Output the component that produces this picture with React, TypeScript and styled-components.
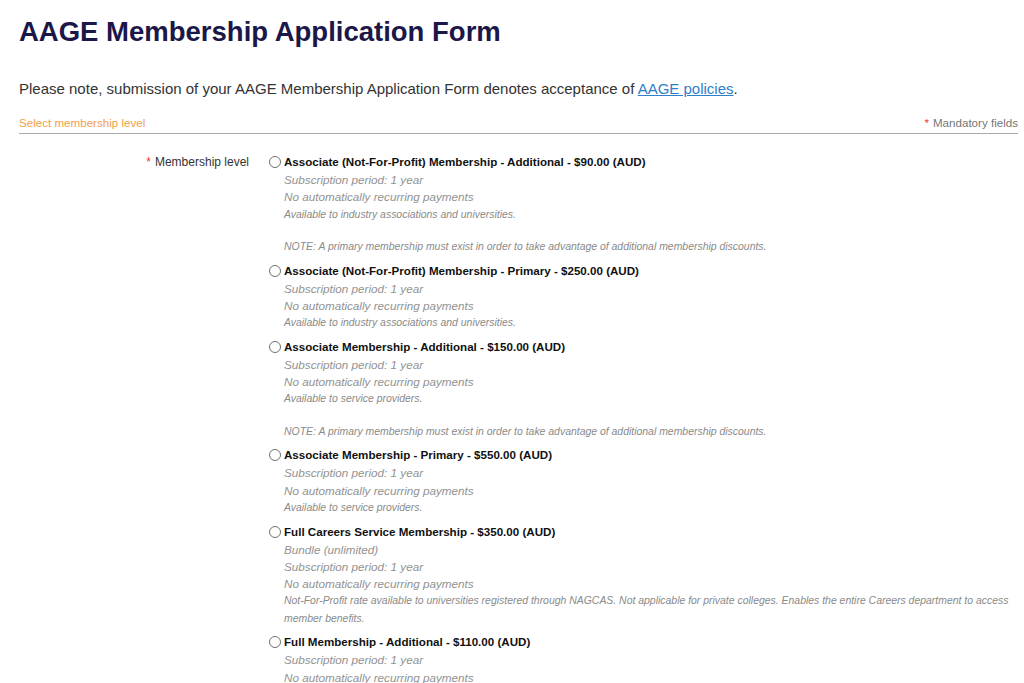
import styled, { createGlobalStyle } from 'styled-components'

const GlobalStyle = createGlobalStyle`
    body {
        margin: 0;
        background: #ffffff;
        font-family: 'Liberation Sans', Arial, sans-serif;
    }
`

const Page = styled.main`
    padding: 14px 6px 0 19px;
`

const Title = styled.h1`
    margin: 0;
    font-size: 27.5px;
    line-height: 36px;
    font-weight: bold;
    color: #1b1749;
`

const Intro = styled.p`
    margin: 29px 0 0;
    font-size: 15px;
    line-height: 20px;
    color: #333333;

    a {
        color: #2f80c8;
        text-decoration: underline;
    }
`

const SectionHeader = styled.header`
    display: flex;
    justify-content: space-between;
    align-items: flex-end;
    margin-top: 16px;
    padding-bottom: 2px;
    border-bottom: 1px solid #aaaaaa;
    font-size: 11.6px;
    line-height: 16px;

    h2 {
        margin: 0;
        font-size: 11.6px;
        font-weight: normal;
        color: #f0a048;
    }

    span {
        color: #777777;
    }
`

const Star = styled.span`
    color: #e03c31 !important;
    margin-right: 4px;
`

const FieldRow = styled.section`
    display: grid;
    grid-template-columns: 230px 1fr;
    column-gap: 20px;
    margin-top: 19px;
`

const FieldLabel = styled.label`
    text-align: right;
    font-size: 12px;
    line-height: 18px;
    color: #333333;
`

const Options = styled.div`
    display: flex;
    flex-direction: column;
    gap: 6.5px;
`

const Option = styled.div`
    display: grid;
    grid-template-columns: 15px 1fr;
`

const Radio = styled.span`
    width: 12px;
    height: 12px;
    margin-top: 3px;
    border: 1px solid #6f6f6f;
    border-radius: 50%;
    box-sizing: border-box;
`

const OptionTitle = styled.div`
    font-size: 11.6px;
    line-height: 18px;
    font-weight: bold;
    color: #111111;
`

const Detail = styled.div<{ $small?: boolean }>`
    font-size: ${(p) => (p.$small ? '10.45px' : '11.7px')};
    line-height: 17.25px;
    font-style: italic;
    color: ${(p) => (p.$small ? '#8a8a8a' : '#929292')};
`

const Gap = styled.div`
    height: 15px;
`

type Level = {
    title: string
    bundle?: boolean
    note?: string
    primaryNote?: boolean
}

const levels: Level[] = [
    {
        title: 'Associate (Not-For-Profit) Membership - Additional - $90.00 (AUD)',
        note: 'Available to industry associations and universities.',
        primaryNote: true,
    },
    {
        title: 'Associate (Not-For-Profit) Membership - Primary - $250.00 (AUD)',
        note: 'Available to industry associations and universities.',
    },
    {
        title: 'Associate Membership - Additional - $150.00 (AUD)',
        note: 'Available to service providers.',
        primaryNote: true,
    },
    {
        title: 'Associate Membership - Primary - $550.00 (AUD)',
        note: 'Available to service providers.',
    },
    {
        title: 'Full Careers Service Membership - $350.00 (AUD)',
        bundle: true,
        note: 'Not-For-Profit rate available to universities registered through NAGCAS. Not applicable for private colleges. Enables the entire Careers department to access member benefits.',
    },
    {
        title: 'Full Membership - Additional - $110.00 (AUD)',
    },
]

export default function App() {
    return (
        <>
            <GlobalStyle />
            <Page>
                <Title>AAGE Membership Application Form</Title>
                <Intro>
                    Please note, submission of your AAGE Membership Application Form denotes
                    acceptance of <a href="#">AAGE policies</a>.
                </Intro>

                <SectionHeader>
                    <h2>Select membership level</h2>
                    <span>
                        <Star>*</Star>Mandatory fields
                    </span>
                </SectionHeader>

                <FieldRow>
                    <FieldLabel>
                        <Star>*</Star>Membership level
                    </FieldLabel>
                    <Options>
                        {levels.map((level) => (
                            <Option key={level.title}>
                                <Radio />
                                <div>
                                    <OptionTitle>{level.title}</OptionTitle>
                                    {level.bundle && <Detail>Bundle (unlimited)</Detail>}
                                    <Detail>Subscription period: 1 year</Detail>
                                    <Detail>No automatically recurring payments</Detail>
                                    {level.note && <Detail $small>{level.note}</Detail>}
                                    {level.primaryNote && (
                                        <>
                                            <Gap />
                                            <Detail $small>
                                                NOTE: A primary membership must exist in order to take
                                                advantage of additional membership discounts.
                                            </Detail>
                                        </>
                                    )}
                                </div>
                            </Option>
                        ))}
                    </Options>
                </FieldRow>
            </Page>
        </>
    )
}
